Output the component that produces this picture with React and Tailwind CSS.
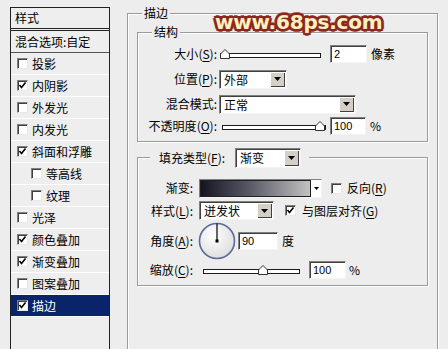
import React from 'react';

const styles = [
  { label: '投影', checked: false },
  { label: '内阴影', checked: true },
  { label: '外发光', checked: false },
  { label: '内发光', checked: false },
  { label: '斜面和浮雕', checked: true },
  { label: '等高线', checked: false, sub: true },
  { label: '纹理', checked: false, sub: true },
  { label: '光泽', checked: false },
  { label: '颜色叠加', checked: true },
  { label: '渐变叠加', checked: true },
  { label: '图案叠加', checked: false },
  { label: '描边', checked: true, active: true },
];

const Check = ({ checked }) => (
  <div className="w-[11px] h-[11px] shrink-0 bg-white border border-[#808080] border-r-[#e8e8e8] border-b-[#e8e8e8] shadow-[inset_1px_1px_0_#404040] flex items-center justify-center">
    {checked && (
      <svg width="9" height="9" viewBox="0 0 9 9">
        <path d="M1.5 4 L3.5 6.5 L7.5 1.5" fill="none" stroke="#000" strokeWidth="1.6" />
      </svg>
    )}
  </div>
);

// accelerator letter, underlined like the windows dialog
const Key = ({ k }) => (
  <>
    (<span className="underline underline-offset-2">{k}</span>):
  </>
);

const Arrow = () => (
  <svg width="7" height="4" viewBox="0 0 7 4">
    <path d="M0 0 H7 L3.5 4 Z" fill="#000" />
  </svg>
);

const Select = ({ value, className }) => (
  <div className={`flex h-[19px] bg-white border border-[#808080] border-r-[#f4f4f4] border-b-[#f4f4f4] shadow-[inset_1px_1px_0_#404040] ${className}`}>
    <div className="flex-1 pl-[4px] pt-[1px] leading-[16px]">{value}</div>
    <div className="w-[15px] m-[1px] bg-[#d4d0c8] shadow-[inset_1px_1px_0_#fff,inset_-1px_-1px_0_#404040] flex items-center justify-center">
      <Arrow />
    </div>
  </div>
);

const Field = ({ value, className }) => (
  <div className={`h-[18px] bg-white border border-[#808080] border-r-[#f4f4f4] border-b-[#f4f4f4] shadow-[inset_1px_1px_0_#404040] pl-[3px] text-[11px] leading-[16px] font-['Liberation_Sans',sans-serif] ${className}`}>
    {value}
  </div>
);

const Slider = ({ width, pos }) => (
  <svg width={width} height="10" viewBox={`0 0 ${width} 10`} className="shrink-0">
    <rect x="0.5" y="4.5" width={width - 1} height="4" fill="#fff" stroke="#1a1a1a" />
    <polygon
      points={`${pos - 4.5},9.5 ${pos - 4.5},5 ${pos},0.5 ${pos + 4.5},5 ${pos + 4.5},9.5`}
      fill="#fff"
      stroke="#333"
    />
  </svg>
);

const Dial = () => (
  <svg width="38" height="38" viewBox="0 0 38 38" className="shrink-0">
    <defs>
      <radialGradient id="dialFill" cx="40%" cy="35%" r="70%">
        <stop offset="0%" stopColor="#ffffff" />
        <stop offset="100%" stopColor="#dcdcdc" />
      </radialGradient>
    </defs>
    <circle cx="19" cy="19" r="17.5" fill="url(#dialFill)" stroke="#5b6a96" strokeWidth="1.6" />
    <line x1="19" y1="19" x2="19" y2="1.5" stroke="#000" strokeWidth="1.2" />
    <rect x="17.5" y="17.5" width="3" height="3" fill="#000" />
  </svg>
);

const groove = 'border border-[#9a9a9a] shadow-[inset_1px_1px_0_#fff,1px_1px_0_#fff]';

export default function App() {
  return (
    <div className="relative w-[448px] h-[349px] overflow-hidden bg-[#ededed] flex text-[12px] text-black font-['Noto_Sans_CJK_SC','Noto_Sans',sans-serif]">
      {/* left list of styles */}
      <div className="ml-[10px] mt-[7px] w-[100px] h-[400px] shrink-0 border border-b-0 border-[#222] bg-[#eeeeee]">
        <div className="h-[23px] pl-[4px] flex items-center border-b-[3px] border-double border-[#222]">样式</div>
        <div className="h-[22px] pl-[4px] flex items-center border-b border-[#555]">混合选项:自定</div>
        {styles.map(s => (
          <div
            key={s.label}
            className={`h-[22px] flex items-center gap-[4px] border-b border-white ${s.sub ? 'pl-[20px]' : 'pl-[6px]'} ${s.active ? 'bg-[#0a246a] text-white' : ''}`}
          >
            <Check checked={s.checked} />
            <span>{s.label}</span>
          </div>
        ))}
      </div>

      {/* right: stroke settings */}
      <div className={`relative ml-[17px] mt-[13px] w-[311px] h-[400px] shrink-0 ${groove} border-b-0`}>
        <div className="absolute left-[14px] -top-[9px] px-[2px] bg-[#ededed] leading-[16px]">描边</div>

        <div className={`relative ml-[9px] mt-[18px] w-[291px] ${groove} pb-[6px]`}>
          <div className="absolute left-[14px] -top-[9px] px-[2px] bg-[#ededed] leading-[16px]">结构</div>

          <div className="mt-[12px] h-[18px] flex items-center">
            <div className="w-[79px] text-right">大小<Key k="S" /></div>
            <div className="ml-[3px]"><Slider width={101} pos={5} /></div>
            <Field value="2" className="ml-[9px] w-[37px]" />
            <span className="ml-[4px]">像素</span>
          </div>

          <div className="mt-[7px] h-[18px] flex items-center">
            <div className="w-[79px] text-right">位置<Key k="P" /></div>
            <Select value="外部" className="ml-[2px] w-[68px]" />
          </div>

          <div className="mt-[7px] h-[18px] flex items-center">
            <div className="w-[79px] text-right">混合模式:</div>
            <Select value="正常" className="ml-[2px] w-[137px]" />
          </div>

          <div className="mt-[4px] h-[18px] flex items-center">
            <div className="w-[79px] text-right whitespace-nowrap">不透明度<Key k="O" /></div>
            <div className="ml-[5px]"><Slider width={104} pos={98} /></div>
            <Field value="100" className="ml-[4px] w-[36px]" />
            <span className="ml-[4px]">%</span>
          </div>
        </div>

        <div className={`relative ml-[9px] mt-[15px] w-[291px] ${groove} pb-[7px]`}>
          <div className="absolute left-[12px] -top-[10px] pl-[9px] pr-[8px] bg-[#ededed] flex items-center">
            <span>填充类型<Key k="F" /></span>
            <Select value="渐变" className="ml-[10px] w-[66px] h-[20px]" />
          </div>

          <div className="mt-[21px] h-[18px] flex items-center">
            <div className="w-[55px] text-right">渐变:</div>
            <div className="ml-[6px] h-[19px] w-[123px] flex bg-white border border-[#808080] border-r-[#f4f4f4] border-b-[#f4f4f4]">
              <div className="w-[111px] h-full bg-[linear-gradient(to_right,#141424,#5a5a66_45%,#c2c2c2)] border border-[#202020]" />
              <div className="flex-1 flex items-center justify-center">
                <svg width="5" height="3" viewBox="0 0 5 3"><path d="M0 0H5L2.5 3Z" fill="#000" /></svg>
              </div>
            </div>
            <div className="ml-[9px]"><Check checked={false} /></div>
            <span className="ml-[5px]">反向(<span className="underline underline-offset-2">R</span>)</span>
          </div>

          <div className="mt-[4px] h-[19px] flex items-center">
            <div className="w-[55px] text-right">样式<Key k="L" /></div>
            <Select value="迸发状" className="ml-[6px] w-[75px]" />
            <div className="ml-[11px]"><Check checked /></div>
            <span className="ml-[6px]">与图层对齐(<span className="underline underline-offset-2">G</span>)</span>
          </div>

          <div className="mt-[2px] h-[38px] flex items-center">
            <div className="w-[55px] text-right">角度<Key k="A" /></div>
            <div className="ml-[5px]"><Dial /></div>
            <Field value="90" className="ml-[2px] w-[40px]" />
            <span className="ml-[4px]">度</span>
          </div>

          <div className="mt-[1px] h-[17px] flex items-center">
            <div className="w-[55px] text-right">缩放<Key k="C" /></div>
            <div className="ml-[10px]"><Slider width={97} pos={60} /></div>
            <Field value="100" className="ml-[9px] w-[37px]" />
            <span className="ml-[3px]">%</span>
          </div>
        </div>
      </div>

      {/* site watermark over the dialog */}
      <div className="absolute left-[215px] top-[10px] text-[20px] font-bold tracking-[-0.2px] leading-[24px] text-[#fcf1bf] font-['DejaVu_Sans',sans-serif] [text-shadow:2px_0_#8a2720,-2px_0_#8a2720,0_2px_#8a2720,0_-2px_#8a2720,2px_2px_#8a2720,-2px_-2px_#8a2720,2px_-2px_#8a2720,-2px_2px_#8a2720,3px_0_#b2504a,-3px_0_#b2504a,0_3px_#b2504a,0_-3px_#b2504a]">
        www.68ps.com
      </div>
    </div>
  );
}
